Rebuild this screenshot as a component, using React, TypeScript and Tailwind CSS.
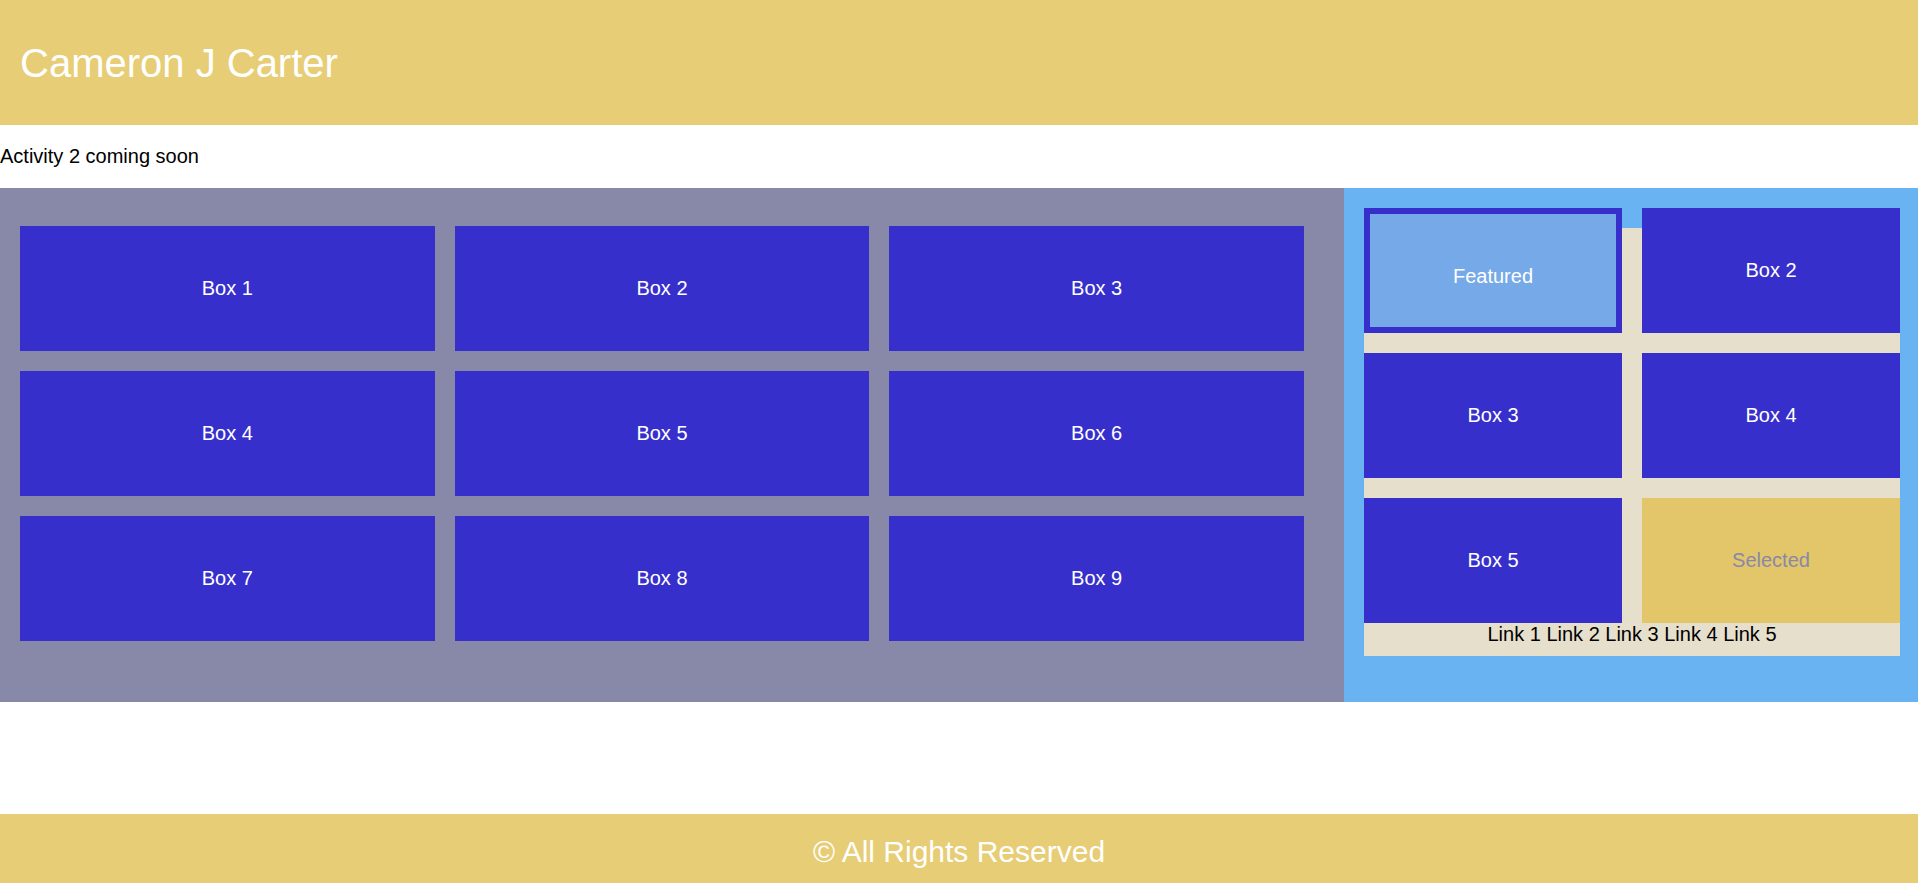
import React from "react";

const Box = ({ label }: { label: string }) => (
  <div className="bg-[#372FCB] text-white text-[20px] flex items-center justify-center pb-[2px]">
    {label}
  </div>
);

export default function App() {
  const left = ["Box 1", "Box 2", "Box 3", "Box 4", "Box 5", "Box 6", "Box 7", "Box 8", "Box 9"];
  return (
    <div className="font-['Liberation_Sans',Arial,sans-serif] w-[1918px] h-[883px] bg-white overflow-hidden flex flex-col">
      <header className="h-[125px] shrink-0 bg-[#E7CD76] flex items-center pl-5 text-white text-[40px] leading-none">
        Cameron J Carter
      </header>
      <div className="h-[63px] shrink-0 flex items-center text-[20px] text-black pb-[2px]">
        Activity 2 coming soon
      </div>
      <section className="h-[514px] shrink-0 flex">
        <div className="w-[1344px] shrink-0 bg-[#8888A8] pt-[38px] pl-5 pr-10">
          <div className="grid grid-cols-3 gap-5 auto-rows-[125px]">
            {left.map((l) => (
              <Box key={l} label={l} />
            ))}
          </div>
        </div>
        <div className="flex-1 bg-[#6AB3F3] pt-10 pl-5 pr-[18px]">
          <div className="bg-[#E6DFCC] pb-[10px] flow-root">
            <div className="grid grid-cols-2 gap-5 auto-rows-[125px] -mt-5">
              <div className="border-[6px] border-[#372FCB] bg-[#76A9E8] text-white text-[20px] flex items-center justify-center pt-[10px]">
                Featured
              </div>
              <Box label="Box 2" />
              <Box label="Box 3" />
              <Box label="Box 4" />
              <Box label="Box 5" />
              <div className="bg-[#E3C66A] text-[#8888A8] text-[20px] flex items-center justify-center pb-[2px]">
                Selected
              </div>
            </div>
            <div className="text-center text-[20px] leading-[23px] text-black">
              Link 1 Link 2 Link 3 Link 4 Link 5
            </div>
          </div>
        </div>
      </section>
      <div className="flex-1" />
      <footer className="h-[69px] shrink-0 bg-[#E7CD76] text-white text-[30px] flex items-center justify-center pt-[6px]">
        © All Rights Reserved
      </footer>
    </div>
  );
}
